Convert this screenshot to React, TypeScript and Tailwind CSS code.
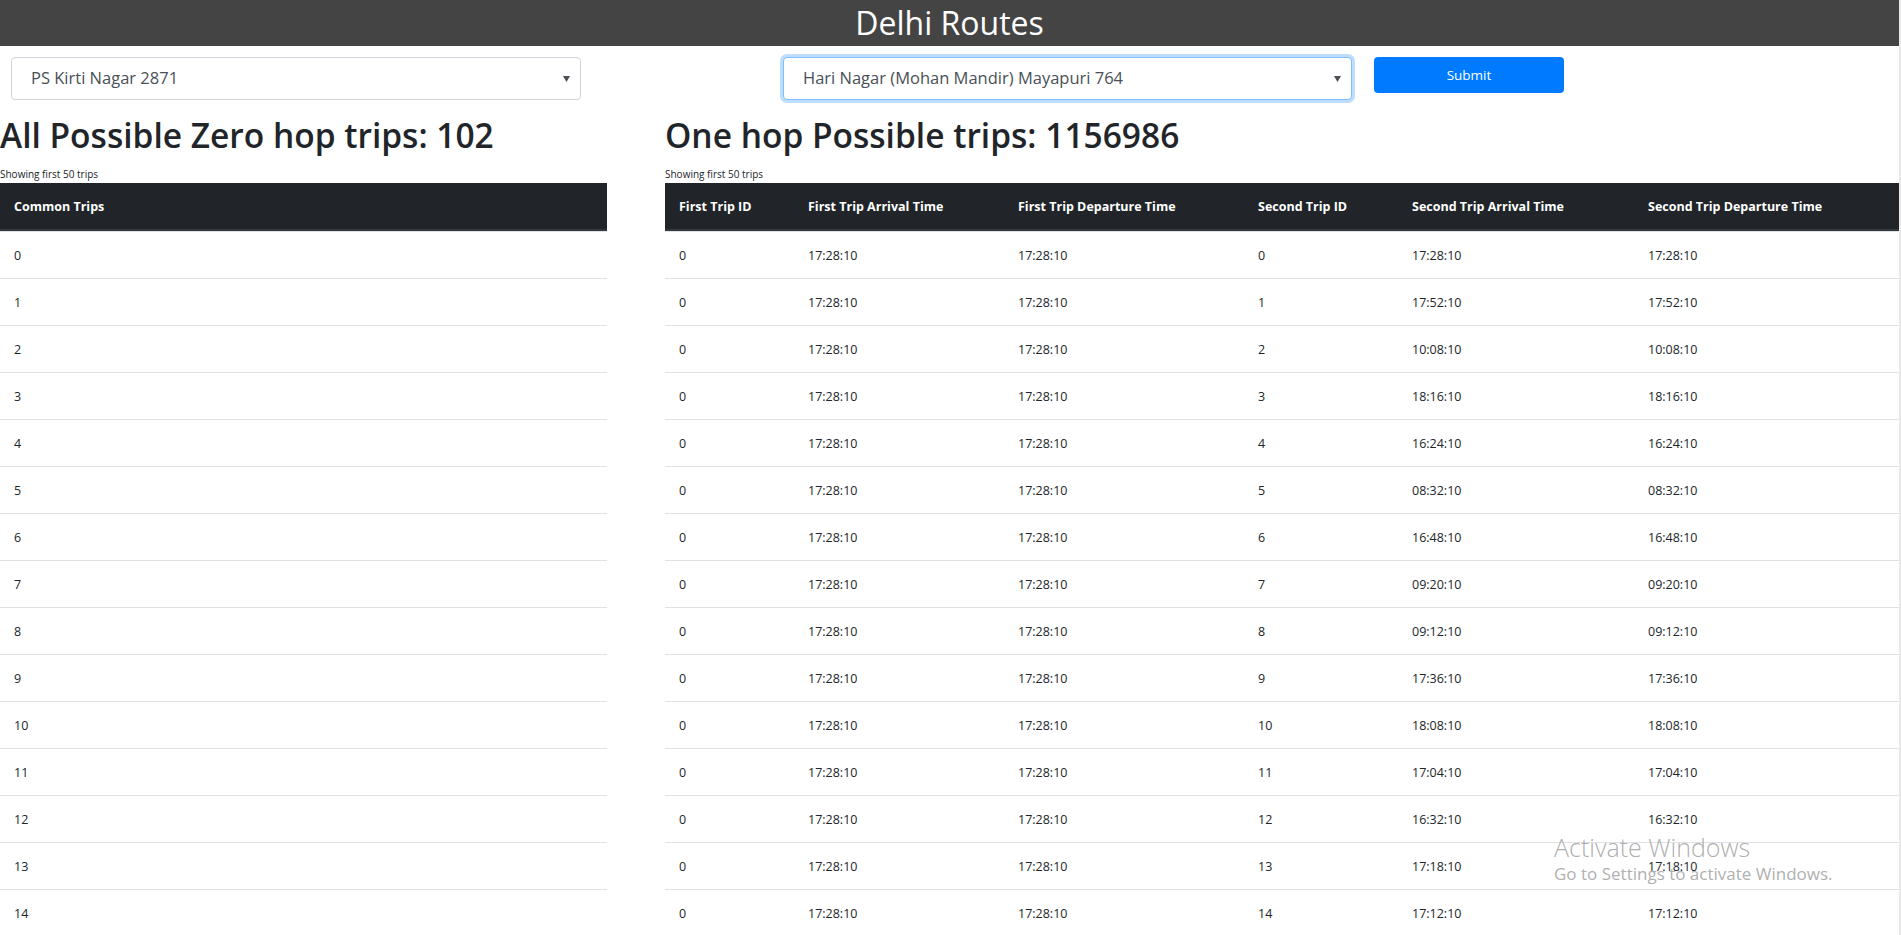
import React from 'react'

const secondTimes = [
  '17:28:10', '17:52:10', '10:08:10', '18:16:10', '16:24:10',
  '08:32:10', '16:48:10', '09:20:10', '09:12:10', '17:36:10',
  '18:08:10', '17:04:10', '16:32:10', '17:18:10', '17:12:10',
  '17:44:10', '18:00:10', '16:56:10', '09:28:10', '08:48:10',
]

const oneHopRows = secondTimes.map((t, i) => ({
  firstId: 0,
  firstArr: '17:28:10',
  firstDep: '17:28:10',
  secondId: i,
  secondArr: t,
  secondDep: t,
}))

const commonTrips = Array.from({ length: 20 }, (_, i) => i)

function Caret() {
  return (
    <svg width="7" height="6" viewBox="0 0 7 6" className="shrink-0">
      <polygon points="0,0 7,0 3.5,6" fill="#4a4f55" />
    </svg>
  )
}

function FakeSelect({ label, focused, className }: { label: string; focused?: boolean; className: string }) {
  return (
    <div
      className={`h-[43px] rounded-[4px] border bg-white pl-[19px] pr-[10px] flex items-center justify-between text-[16.5px] text-[#495057] ${
        focused ? 'border-[#80bdff] shadow-[0_0_0_3px_rgba(0,123,255,0.25)]' : 'border-[#ced4da]'
      } ${className}`}
    >
      <span>{label}</span>
      <Caret />
    </div>
  )
}

export default function App() {
  return (
    <div className="relative h-screen overflow-hidden bg-white flex font-['Open_Sans',sans-serif] text-[#212529]">
      <div className="flex-1 min-w-0">
        {/* title bar */}
        <header className="h-[46px] bg-[#444444] flex items-center justify-center text-white text-[32px] leading-none">
          Delhi Routes
        </header>

        {/* pickers */}
        <div className="flex items-start pt-[11px] pl-[11px]">
          <FakeSelect label="PS Kirti Nagar 2871" className="w-[570px]" />
          <FakeSelect label="Hari Nagar (Mohan Mandir) Mayapuri 764" focused className="ml-[202px] w-[569px]" />
          <button className="ml-[22px] w-[190px] h-[36px] pt-[1px] rounded-[4px] bg-[#007bff] text-white text-[13.5px]">
            Submit
          </button>
        </div>

        <div className="flex items-start">
          {/* zero hop */}
          <section className="w-[607px] shrink-0">
            <h2 className="mt-[15px] text-[33.5px] leading-[40px] font-semibold">All Possible Zero hop trips: 102</h2>
            <p className="mt-[13px] text-[10px] leading-[12px]">Showing first 50 trips</p>
            <div className="mt-[3px]">
              <div className="h-[48px] pt-[3px] bg-[#212529] border-b-2 border-[#32383e] flex items-center pl-[14px] text-white font-bold text-[12.5px]">
                Common Trips
              </div>
              {commonTrips.map((n) => (
                <div key={n} className="h-[47px] pt-[2px] border-t border-[#dee2e6] flex items-center pl-[14px] text-[12.5px]">
                  {n}
                </div>
              ))}
            </div>
          </section>

          {/* one hop */}
          <section className="ml-[58px] flex-1 min-w-0">
            <h2 className="mt-[15px] text-[33.5px] leading-[40px] font-semibold">One hop Possible trips: 1156986</h2>
            <p className="mt-[13px] text-[10px] leading-[12px]">Showing first 50 trips</p>
            <div className="mt-[3px] text-[12.5px]">
              <div className="h-[48px] pt-[3px] bg-[#212529] border-b-2 border-[#32383e] grid grid-cols-[129px_210px_240px_154px_236px_1fr] items-center text-white font-bold">
                <div className="pl-[14px]">First Trip ID</div>
                <div className="pl-[14px]">First Trip Arrival Time</div>
                <div className="pl-[14px]">First Trip Departure Time</div>
                <div className="pl-[14px]">Second Trip ID</div>
                <div className="pl-[14px]">Second Trip Arrival Time</div>
                <div className="pl-[14px]">Second Trip Departure Time</div>
              </div>
              {oneHopRows.map((r) => (
                <div
                  key={r.secondId}
                  className="h-[47px] pt-[2px] border-t border-[#dee2e6] grid grid-cols-[129px_210px_240px_154px_236px_1fr] items-center"
                >
                  <div className="pl-[14px]">{r.firstId}</div>
                  <div className="pl-[14px]">{r.firstArr}</div>
                  <div className="pl-[14px]">{r.firstDep}</div>
                  <div className="pl-[14px]">{r.secondId}</div>
                  <div className="pl-[14px]">{r.secondArr}</div>
                  <div className="pl-[14px]">{r.secondDep}</div>
                </div>
              ))}
            </div>
          </section>
        </div>
      </div>
      <div className="w-[2px] shrink-0 bg-[#e9e9e9]" />

      {/* os watermark */}
      <div className="absolute left-[1554px] top-[833px] pointer-events-none text-[#9a9a9a]/80">
        <div className="text-[25px] leading-[28px] font-light">Activate Windows</div>
        <div className="mt-[2px] text-[17px] leading-[22px]">Go to Settings to activate Windows.</div>
      </div>
    </div>
  )
}
